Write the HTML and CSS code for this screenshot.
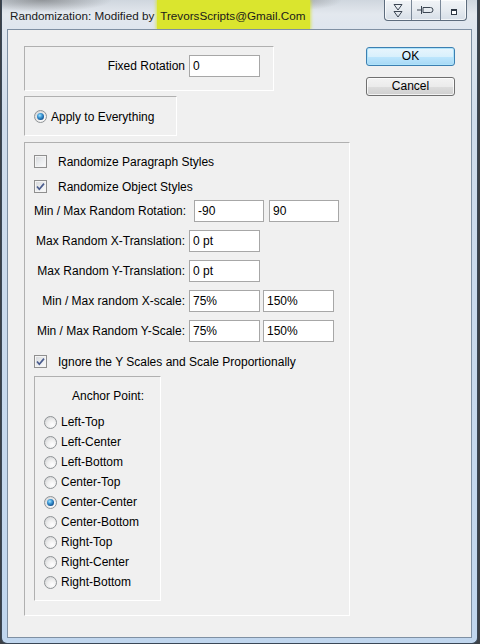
FILE: index.html
```html
<!DOCTYPE html>
<html>
<head>
<meta charset="utf-8">
<title>Randomization</title>
<link rel="stylesheet" href="styles.css">
</head>
<body>
<div class="window">
  <div class="titlebar">
    <span class="title">Randomization: Modified by</span>
    <span class="title-mark">TrevorsScripts@Gmail.Com</span>
    <div class="caption">
      <span class="cbtn cbtn-a">
        <svg width="10" height="15" viewBox="0 0 10 15"><path d="M1 1.5H9L5 7Z M1 8.5H9L5 14Z" fill="none" stroke="#3b4552" stroke-width="1"/></svg>
      </span>
      <span class="cbtn cbtn-b">
        <svg width="19" height="10" viewBox="0 0 19 10"><path d="M0 5H4 M4.5 1V9 M6 2.5H13.5A2.5 2.5 0 0 1 13.5 7.5H6Z" fill="none" stroke="#3b4552" stroke-width="1"/></svg>
      </span>
      <span class="cbtn cbtn-c">
        <svg width="6" height="6" viewBox="0 0 6 6"><rect x="0.5" y="0.5" width="5" height="5" fill="#fff" stroke="#2f3844"/><path d="M0 1.5H6" stroke="#2f3844"/></svg>
      </span>
    </div>
  </div>
  <div class="client">
    <div class="main-col">
      <div class="panel panel-fixed">
        <div class="fixed-row">
          <span class="lbl">Fixed Rotation</span>
          <input class="field w71 gap4" type="text" value="0">
        </div>
      </div>
      <div class="panel panel-apply">
        <span class="radio on"></span>
        <span class="opt-text">Apply to Everything</span>
      </div>
      <div class="panel panel-big">
        <div class="check-row">
          <span class="check"></span>
          <span class="check-text">Randomize Paragraph Styles</span>
        </div>
        <div class="check-row row-second">
          <span class="check on"><svg width="11" height="11" viewBox="0 0 11 11"><path d="M2 5.5L4.3 8.2L9 2.6" fill="none" stroke="#4a5c8e" stroke-width="1.7"/></svg></span>
          <span class="check-text">Randomize Object Styles</span>
        </div>
        <div class="field-row row-rot">
          <span class="field-lbl">Min / Max Random Rotation:</span>
          <input class="field w70 gap9" type="text" value="-90">
          <input class="field w70 gap5" type="text" value="90">
        </div>
        <div class="field-row">
          <span class="field-lbl">Max Random X-Translation:</span>
          <input class="field w71 gap4" type="text" value="0 pt">
        </div>
        <div class="field-row">
          <span class="field-lbl">Max Random Y-Translation:</span>
          <input class="field w71 gap4" type="text" value="0 pt">
        </div>
        <div class="field-row">
          <span class="field-lbl">Min / Max random X-scale:</span>
          <input class="field w71 gap4" type="text" value="75%">
          <input class="field w71 gap3" type="text" value="150%">
        </div>
        <div class="field-row">
          <span class="field-lbl">Min / Max Random Y-Scale:</span>
          <input class="field w71 gap4" type="text" value="75%">
          <input class="field w71 gap3" type="text" value="150%">
        </div>
        <div class="check-row row-ignore">
          <span class="check on"><svg width="11" height="11" viewBox="0 0 11 11"><path d="M2 5.5L4.3 8.2L9 2.6" fill="none" stroke="#4a5c8e" stroke-width="1.7"/></svg></span>
          <span class="check-text">Ignore the Y Scales and Scale Proportionally</span>
        </div>
        <div class="panel panel-anchor">
          <div class="anchor-title">Anchor Point:</div>
          <div class="radio-row first"><span class="radio"></span><span class="opt-text">Left-Top</span></div>
          <div class="radio-row"><span class="radio"></span><span class="opt-text">Left-Center</span></div>
          <div class="radio-row"><span class="radio"></span><span class="opt-text">Left-Bottom</span></div>
          <div class="radio-row"><span class="radio"></span><span class="opt-text">Center-Top</span></div>
          <div class="radio-row"><span class="radio on"></span><span class="opt-text">Center-Center</span></div>
          <div class="radio-row"><span class="radio"></span><span class="opt-text">Center-Bottom</span></div>
          <div class="radio-row"><span class="radio"></span><span class="opt-text">Right-Top</span></div>
          <div class="radio-row"><span class="radio"></span><span class="opt-text">Right-Center</span></div>
          <div class="radio-row"><span class="radio"></span><span class="opt-text">Right-Bottom</span></div>
        </div>
      </div>
    </div>
    <div class="btn-col">
      <button class="btn btn-default" type="button">OK</button>
      <button class="btn" type="button">Cancel</button>
    </div>
  </div>
</div>
</body>
</html>
```

FILE: styles.css
```css
* { box-sizing: border-box; }
html, body { margin: 0; padding: 0; }
body {
  width: 480px;
  height: 644px;
  overflow: hidden;
  background: #3c4147;
  font-family: "Liberation Sans", Arial, sans-serif;
  font-size: 12px;
  color: #000;
}

/* window frame */
.window {
  margin-left: 1px;
  width: 477px;
  height: 644px;
  display: flex;
  flex-direction: column;
  padding: 0 5px 5px 5px;
  border: 1px solid #3a4756;
  border-top: none;
  border-radius: 0 0 6px 6px;
  background:
    radial-gradient(ellipse 70px 12px at 40px 0, rgba(70,70,70,.45), rgba(70,70,70,0)),
    radial-gradient(ellipse 40px 10px at 300px 0, rgba(90,90,90,.35), rgba(90,90,90,0)),
    linear-gradient(to bottom, #cfd6de 0, #e3e8ee 14px, #dfe6ee 28px, #cfdceb 120px, #c0d6ee 100%);
}

.titlebar {
  flex: none;
  height: 29px;
  display: flex;
  align-items: stretch;
  padding-left: 3px;
}
.title {
  display: flex;
  align-items: center;
  padding-top: 2px;
  font-family: "Segoe UI", "Liberation Sans", sans-serif;
  font-size: 11.7px;
  color: #1a1a1a;
  white-space: nowrap;
}
.title-mark {
  display: flex;
  align-items: center;
  margin-left: 3px;
  padding: 2px 5px 0 3px;
  background: #dae52e;
  box-shadow: 0 0 3px 1px rgba(218,229,46,.8);
  font-family: "Segoe UI", "Liberation Sans", sans-serif;
  font-size: 11.7px;
  color: #1a1a1a;
  white-space: nowrap;
}
.caption {
  margin-left: auto;
  margin-right: 5px;
  align-self: flex-start;
  display: flex;
  height: 21px;
  border: 1px solid #5d6c7d;
  border-top: none;
  border-radius: 0 0 4px 4px;
  overflow: hidden;
  background: linear-gradient(to bottom, #f1f4f7 0, #e6ebf0 50%, #d6dee7 100%);
  box-shadow: inset 0 0 0 1px rgba(255,255,255,.7);
}
.cbtn {
  display: flex;
  align-items: center;
  justify-content: center;
  height: 100%;
}
.cbtn + .cbtn { border-left: 1px solid #7a8898; }
.cbtn-a { width: 26px; }
.cbtn-b { width: 29px; }
.cbtn-c { width: 26px; padding-top: 4px; }

/* client area */
.client {
  flex: 1;
  display: flex;
  justify-content: space-between;
  align-items: flex-start;
  padding: 16px 16px 0 16px;
  background: #f0f0f0;
  border: 1px solid #7f90a3;
}

.main-col {
  display: flex;
  flex-direction: column;
  align-items: flex-start;
}

.panel {
  border-style: solid;
  border-width: 1px;
  border-color: #b0b0b0 #ffffff #ffffff #b0b0b0;
}

.panel-fixed {
  width: 250px;
  height: 45px;
  display: flex;
  justify-content: flex-end;
  align-items: flex-start;
  padding: 8px 13px 0 0;
}
.fixed-row {
  display: flex;
  align-items: center;
}

.panel-apply {
  margin-top: 5px;
  width: 153px;
  height: 40px;
  display: flex;
  align-items: center;
  padding: 1px 0 0 9px;
}

.panel-big {
  margin-top: 6px;
  width: 326px;
  padding: 11px 0 14px 9px;
}

.check-row {
  display: flex;
  align-items: center;
  height: 15px;
}
.row-second { margin-top: 10px; }
.row-ignore { margin-top: 12px; }
.check-text { margin-left: 11px; white-space: nowrap; }

.field-row {
  display: flex;
  align-items: center;
  height: 22px;
  margin-top: 8px;
}
.row-rot { margin-top: 6px; }
.field-lbl {
  width: 151px;
  text-align: right;
  white-space: nowrap;
}

.field {
  height: 22px;
  border: 1px solid #a7a7a7;
  background: #fff;
  padding: 0 0 0 3px;
  margin: 0;
  font-family: "Liberation Sans", Arial, sans-serif;
  font-size: 12px;
  color: #000;
  outline: none;
}
.w70 { width: 70px; }
.w71 { width: 71px; }
.gap3 { margin-left: 3px; }
.gap4 { margin-left: 4px; }
.gap5 { margin-left: 5px; }
.gap9 { margin-left: 9px; }

/* checkbox */
.check {
  flex: none;
  width: 13px;
  height: 13px;
  display: flex;
  align-items: center;
  justify-content: center;
  border: 1px solid #8f8f8f;
  background: linear-gradient(135deg, #d4d6d9 0, #eceef0 55%, #fbfbfb 100%);
  box-shadow: inset 0 0 0 1px #f4f4f4;
}

/* radio */
.radio {
  flex: none;
  position: relative;
  width: 13px;
  height: 13px;
  border-radius: 50%;
  border: 1px solid #8f9396;
  background: radial-gradient(circle at 65% 70%, #ffffff 0, #eeeeee 45%, #c9cbcd 100%);
}
.radio.on::after {
  content: "";
  position: absolute;
  left: 2px;
  top: 2px;
  width: 7px;
  height: 7px;
  border-radius: 50%;
  background: radial-gradient(circle at 40% 35%, #a8e6ff 0, #3f9ad6 35%, #10508f 75%, #0c3d70 100%);
}
.opt-text { margin-left: 4px; white-space: nowrap; }

/* anchor panel */
.panel-anchor {
  margin-top: 7px;
  width: 127px;
  padding: 12px 0 8px 9px;
}
.anchor-title {
  height: 15px;
  line-height: 15px;
  padding-left: 28px;
}
.radio-row {
  display: flex;
  align-items: center;
  height: 20px;
}
.radio-row.first { margin-top: 8px; }

/* buttons */
.btn-col {
  margin-top: 1px;
  display: flex;
  flex-direction: column;
}
.btn {
  width: 89px;
  height: 19px;
  margin: 0;
  padding: 0;
  border: 1px solid #707070;
  border-radius: 3px;
  font-family: "Liberation Sans", Arial, sans-serif;
  font-size: 12px;
  color: #000;
  line-height: 17px;
  background: linear-gradient(to bottom, #f3f3f3 0, #ebebeb 50%, #dddddd 51%, #cfcfcf 100%);
  box-shadow: inset 0 0 0 1px rgba(255,255,255,.75);
}
.btn + .btn { margin-top: 11px; }
.btn-default {
  border-color: #3c7fb1;
  background: linear-gradient(to bottom, #e8f5fd 0, #d9f0fc 50%, #bee6fd 51%, #a7d9f5 100%);
  box-shadow: inset 0 0 0 1px #aee3fa;
}
```
